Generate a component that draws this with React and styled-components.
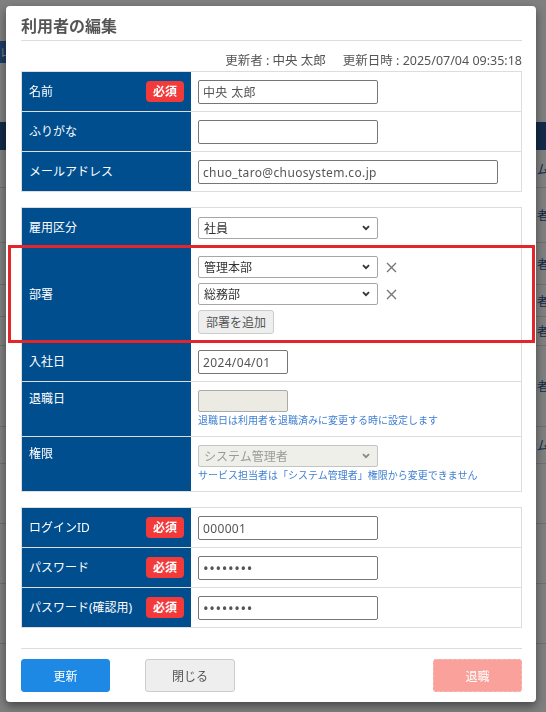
import React from "react";
import styled, { createGlobalStyle } from "styled-components";

const GlobalStyle = createGlobalStyle`
  html, body {
    margin: 0;
    padding: 0;
  }
  body {
    width: 546px;
    height: 712px;
    overflow: hidden;
    background: #fff;
    font-family: "Noto Sans", "Noto Sans CJK JP", sans-serif;
    font-size: 12px;
    color: #333;
  }
  * {
    box-sizing: border-box;
  }
`;

/* ---------- page behind the dialog ---------- */

const Page = styled.div`
  width: 546px;
  height: 712px;
  overflow: hidden;
  background: #fff;
`;

const PageTop = styled.div`
  height: 41px;
`;

const PageToolbar = styled.div`
  height: 22px;
  display: flex;
`;

const PageButton = styled.div`
  width: 80px;
  background: #3c78c8;
  color: #fff;
  font-size: 12px;
  line-height: 22px;
  padding-left: 1px;
`;

const PageSpacer = styled.div`
  height: 59px;
`;

const ListHeader = styled.div`
  height: 28px;
  background: #27548f;
`;

const ListRow = styled.div`
  height: ${(p) => p.$h}px;
  display: grid;
  grid-template-columns: 501px 1fr;
  align-items: center;
  border-bottom: 1px solid #ddd;
  color: #27548f;
  font-size: 12px;
  white-space: nowrap;
`;

const listRows = [
  { h: 38, t: "システム" },
  { h: 55, t: "主担当者" },
  { h: 42, t: "主担当者" },
  { h: 32, t: "主担当者" },
  { h: 29, t: "主担当者" },
  { h: 81, t: "主担当者" },
  { h: 37, t: "システム" },
  { h: 60, t: "" },
  { h: 60, t: "" },
  { h: 60, t: "" },
];

/* ---------- dialog ---------- */

const Overlay = styled.div`
  position: fixed;
  inset: 0;
  background: rgba(0, 0, 0, 0.5);
  padding: 6px 10px 0 6px;
`;

const Modal = styled.div`
  position: relative;
  width: 530px;
  background: #fff;
  border-radius: 4px;
  box-shadow: 0 4px 10px rgba(0, 0, 0, 0.45);
  padding: 9px 14px 10px 15px;
`;

const Title = styled.h2`
  margin: 0;
  font-size: 16px;
  line-height: 22px;
  font-weight: bold;
  color: #555;
  padding-bottom: 3px;
  border-bottom: 1px solid #ddd;
`;

const UpdateInfo = styled.div`
  margin: 11px 0 1px;
  display: flex;
  justify-content: flex-end;
  gap: 17px;
  line-height: 18px;
  font-size: 12.5px;
  color: #555;
`;

const FormTable = styled.div`
  margin-top: ${(p) => p.$gap || 0}px;
  border: 1px solid #ddd;
`;

const Row = styled.div`
  display: grid;
  grid-template-columns: 169px 1fr;
  min-height: 39px;

  & + & {
    border-top: 1px solid #ddd;
  }
`;

const LabelCell = styled.div`
  background: #014e8f;
  color: #fff;
  font-size: 12px;
  display: flex;
  justify-content: space-between;
  align-items: ${(p) => (p.$top ? "flex-start" : "center")};
  padding: ${(p) => (p.$top ? "8px 7px 0" : "0 7px")};
  line-height: 18px;
  white-space: nowrap;
`;

const Badge = styled.span`
  width: 38px;
  height: 21px;
  border-radius: 4px;
  background: #f23a3a;
  color: #fff;
  font-size: 12px;
  font-weight: bold;
  display: flex;
  align-items: center;
  justify-content: center;
`;

const ValueCell = styled.div`
  padding: 8px 7px 7px;
  display: flex;
  flex-direction: column;
  justify-content: center;
  align-items: flex-start;
  gap: ${(p) => p.$gap || 0}px;
`;

const TextInput = styled.input`
  width: ${(p) => p.$w || 180}px;
  height: ${(p) => (p.disabled ? 22 : 24)}px;
  border: 1px solid ${(p) => (p.disabled ? "#aaa" : "#767676")};
  border-radius: 2px;
  background: ${(p) => (p.disabled ? "#ebebe4" : "#fff")};
  padding: 0 4px;
  font-family: inherit;
  font-size: ${(p) => (p.type === "password" ? 15 : 12)}px;
  letter-spacing: ${(p) => (p.type === "password" ? 0.6 : 0.35)}px;
  color: #555;
  outline: none;
`;

const SelectLine = styled.div`
  display: flex;
  align-items: center;
  gap: 8px;
`;

const SelectWrap = styled.div`
  position: relative;
  width: 180px;
  height: 22px;
`;

const SelectField = styled.select`
  appearance: none;
  width: 100%;
  height: 100%;
  border: 1px solid #a6a6a6;
  border-radius: 2px;
  background: #fff;
  padding: 0 20px 0 5px;
  font-family: inherit;
  font-size: 12px;
  color: #333;
  outline: none;

  &:disabled {
    background: #efefea;
    border-color: #c4c4c4;
    color: #999;
    opacity: 1;
  }
`;

const Chevron = styled.svg`
  position: absolute;
  right: 8px;
  top: 8px;
  width: 8px;
  height: 6px;
  fill: none;
  stroke: ${(p) => (p.$disabled ? "#888" : "#333")};
  stroke-width: 1.8;
  pointer-events: none;
`;

const RemoveIcon = styled.svg`
  width: 11px;
  height: 11px;
  stroke: #777;
  stroke-width: 1.4;
  fill: none;
`;

const SmallButton = styled.button`
  width: 76px;
  height: 24px;
  border: 1px solid #ccc;
  border-radius: 3px;
  background: #eee;
  color: #555;
  font-family: inherit;
  font-size: 12px;
  padding: 0;
`;

const Helper = styled.div`
  font-size: 10px;
  line-height: 17px;
  color: #3f7fd0;
  white-space: nowrap;
`;

const Footer = styled.div`
  margin-top: 20px;
  border-top: 1px solid #ddd;
  padding-top: 10px;
  display: flex;
  align-items: center;
`;

const variants = {
  primary: "background:#1e88e5;border:1px solid #1e88e5;color:#fff;",
  plain: "background:#eee;border:1px solid #ccc;color:#555;",
  danger: "background:#f9a19a;border:1px dashed #f5bdb8;color:#fff;",
};

const FooterButton = styled.button`
  width: ${(p) => p.$w || 89}px;
  height: 33px;
  border-radius: 3px;
  font-family: inherit;
  font-size: 12px;
  padding: 0;
  margin-left: ${(p) => (p.$push ? "auto" : `${p.$ml || 0}px`)};
  ${(p) => variants[p.$variant]}
`;

const Highlight = styled.div`
  position: absolute;
  left: 2px;
  top: 239px;
  width: 527px;
  height: 98px;
  border: 3px solid #e3262b;
  pointer-events: none;
`;

const Select = ({ value, disabled }) => (
  <SelectWrap>
    <SelectField defaultValue={value} disabled={disabled}>
      <option>{value}</option>
    </SelectField>
    <Chevron viewBox="0 0 8 6" $disabled={disabled}>
      <path d="M1 1.2l3 3 3-3" />
    </Chevron>
  </SelectWrap>
);

const Remove = () => (
  <RemoveIcon viewBox="0 0 11 11">
    <path d="M1 1l9 9M10 1l-9 9" />
  </RemoveIcon>
);

const Field = ({ label, required, top, gap, children }) => (
  <Row>
    <LabelCell $top={top}>
      <span>{label}</span>
      {required && <Badge>必須</Badge>}
    </LabelCell>
    <ValueCell $gap={gap}>{children}</ValueCell>
  </Row>
);

const App = () => {
  return (
    <>
      <GlobalStyle />
      <Page>
        <PageTop />
        <PageToolbar>
          <PageButton>山田</PageButton>
        </PageToolbar>
        <PageSpacer />
        <ListHeader />
        {listRows.map((r, i) => (
          <ListRow key={i} $h={r.h}>
            <span />
            <span>{r.t}</span>
          </ListRow>
        ))}
      </Page>

      <Overlay>
        <Modal>
          <Title>利用者の編集</Title>
          <UpdateInfo>
            <span>更新者 : 中央 太郎</span>
            <span>更新日時 : 2025/07/04 09:35:18</span>
          </UpdateInfo>

          <FormTable>
            <Field label="名前" required>
              <TextInput defaultValue="中央 太郎" />
            </Field>
            <Field label="ふりがな">
              <TextInput defaultValue="" />
            </Field>
            <Field label="メールアドレス">
              <TextInput $w={300} defaultValue="chuo_taro@chuosystem.co.jp" />
            </Field>
          </FormTable>

          <FormTable $gap={15}>
            <Field label="雇用区分">
              <Select value="社員" />
            </Field>
            <Field label="部署" gap={5}>
              <SelectLine>
                <Select value="管理本部" />
                <Remove />
              </SelectLine>
              <SelectLine>
                <Select value="総務部" />
                <Remove />
              </SelectLine>
              <SmallButton>部署を追加</SmallButton>
            </Field>
            <Field label="入社日">
              <TextInput $w={90} defaultValue="2024/04/01" />
            </Field>
            <Field label="退職日" top>
              <TextInput $w={90} disabled defaultValue="" />
              <Helper>退職日は利用者を退職済みに変更する時に設定します</Helper>
            </Field>
            <Field label="権限" top>
              <Select value="システム管理者" disabled />
              <Helper>サービス担当者は「システム管理者」権限から変更できません</Helper>
            </Field>
          </FormTable>

          <FormTable $gap={15}>
            <Field label="ログインID" required>
              <TextInput defaultValue="000001" />
            </Field>
            <Field label="パスワード" required>
              <TextInput type="password" defaultValue="password" />
            </Field>
            <Field label="パスワード(確認用)" required>
              <TextInput type="password" defaultValue="password" />
            </Field>
          </FormTable>

          <Footer>
            <FooterButton $variant="primary">更新</FooterButton>
            <FooterButton $variant="plain" $w={90} $ml={35}>
              閉じる
            </FooterButton>
            <FooterButton $variant="danger" $push>
              退職
            </FooterButton>
          </Footer>

          <Highlight />
        </Modal>
      </Overlay>
    </>
  );
};

export default App;
